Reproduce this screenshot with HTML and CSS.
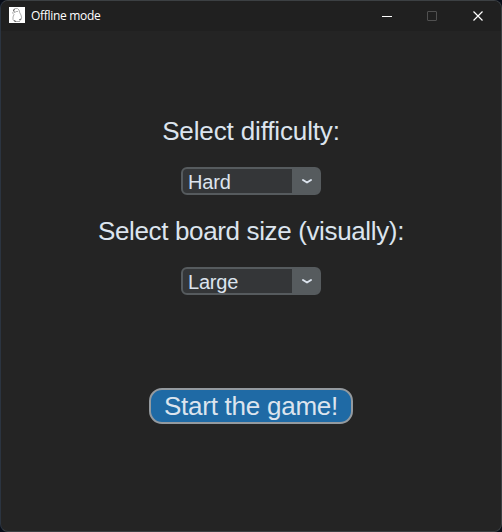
FILE: index.html
```html
<!DOCTYPE html>
<html lang="en">
<head>
<meta charset="utf-8">
<title>Offline mode</title>
<link rel="stylesheet" href="styles.css">
</head>
<body>
<div class="window">
  <header class="titlebar">
    <svg class="app-icon" width="16" height="16" viewBox="0 0 16 16" fill="none">
      <rect width="16" height="16" fill="#fff"/>
      <path d="M4.500 4.500Q4 2 6 1.600Q9 .8 10 3Q10.500 6 12 8Q13.500 11 11.500 13.500" stroke="#999" stroke-width=".8"/>
      <path d="M4.500 4.500L3.500 6L5 7.500Q3.500 10 4 12.500L5.500 14.500H11" stroke="#999" stroke-width=".8"/>
      <path d="M4 3.500L6 2.500M5 5H6.500M8 4V5M5 13.500L7 14.500M10 13L12 12" stroke="#555" stroke-width=".9"/>
    </svg>
    <h1 class="title">Offline mode</h1>
    <div class="controls">
      <svg class="control" width="46" height="30" viewBox="0 0 46 30"><path d="M19 15.500H29" stroke="#fff"/></svg>
      <svg class="control" width="46" height="30" viewBox="0 0 46 30"><rect x="18.500" y="10.500" width="9" height="9" rx=".5" fill="none" stroke="#505050"/></svg>
      <svg class="control" width="46" height="30" viewBox="0 0 46 30"><path d="M18.500 10.500L27.500 19.500M27.500 10.500L18.500 19.500" stroke="#fff" stroke-width="1.200"/></svg>
    </div>
  </header>
  <main class="content">
    <p class="label difficulty">Select difficulty:</p>
    <div class="select">
      <span class="value">Hard</span>
      <span class="arrow"><svg width="12" height="8" viewBox="0 0 12 8"><path d="M2 3L6 5.500L10 3" fill="none" stroke="#dce4ee" stroke-width="2" stroke-linecap="round" stroke-linejoin="round"/></svg></span>
    </div>
    <p class="label board-size">Select board size (visually):</p>
    <div class="select">
      <span class="value">Large</span>
      <span class="arrow"><svg width="12" height="8" viewBox="0 0 12 8"><path d="M2 3L6 5.500L10 3" fill="none" stroke="#dce4ee" stroke-width="2" stroke-linecap="round" stroke-linejoin="round"/></svg></span>
    </div>
    <button class="start">Start the game!</button>
  </main>
</div>
</body>
</html>
```
FILE: styles.css
```css
* { box-sizing: border-box; }
body { margin: 0; background: #080d18; }
.window {
  width: 502px;
  height: 532px;
  border: 1px solid #3c4043;
  border-left-color: #2b3440;
  border-radius: 8px;
  background: #242424;
  overflow: hidden;
}
.titlebar {
  display: flex;
  align-items: center;
  height: 30px;
  padding-left: 8px;
  background: #202020;
}
.app-icon { flex: none; margin-top: -2px; }
.title {
  margin: 0 0 0 6px;
  color: #fff;
  font: 400 12px/16px "Open Sans", "Noto Sans", sans-serif;
  letter-spacing: -0.3px;
}
.controls { display: flex; margin-left: auto; }
.control { display: block; margin-top: -1px; }
.content {
  display: flex;
  flex-direction: column;
  align-items: center;
  padding-top: 82px;
  color: #dce4ee;
  font-family: "Liberation Sans", Arial, sans-serif;
}
.label {
  height: 36px;
  margin: 0 0 18px;
  font-size: 26px;
  line-height: 36px;
}
.difficulty { letter-spacing: -0.14px; }
.board-size { letter-spacing: -0.36px; }
.select {
  display: flex;
  width: 140px;
  height: 28px;
  margin-bottom: 18px;
  border: 2px solid #565b5e;
  border-radius: 6px;
  background: #565b5e;
}
.value {
  width: 109px;
  padding-left: 5px;
  border-radius: 4px 0 0 4px;
  background: #343638;
  font-size: 20px;
  line-height: 26px;
  letter-spacing: -0.2px;
}
.arrow {
  display: flex;
  flex: 1;
  align-items: center;
  justify-content: center;
  padding-left: 2px;
}
.start {
  width: 204px;
  height: 36px;
  margin-top: 75px;
  padding: 0;
  border: 2px solid #949a9f;
  border-radius: 13px;
  background: #1f6aa5;
  color: #dce4ee;
  font: 26px/32px "Liberation Sans", Arial, sans-serif;
  letter-spacing: -0.25px;
}
```
